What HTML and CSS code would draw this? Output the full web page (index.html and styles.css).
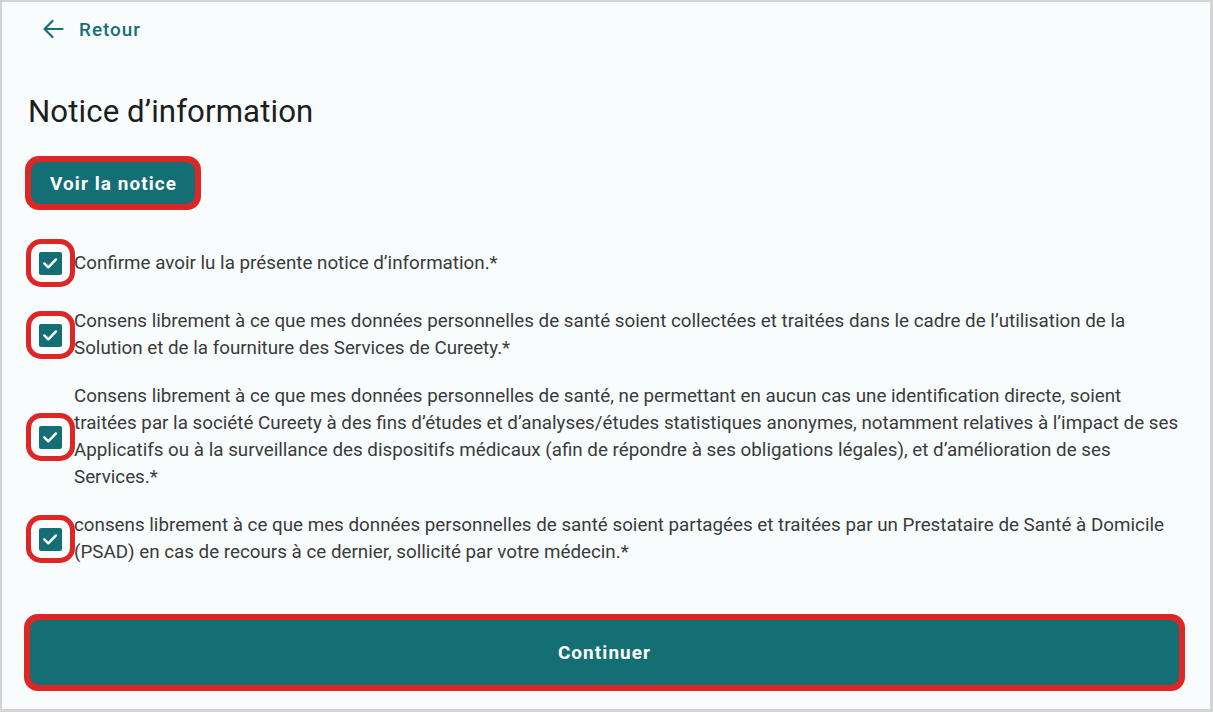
FILE: index.html
```html
<!DOCTYPE html>
<html lang="fr">
<head>
<meta charset="utf-8">
<title>Notice d'information</title>
<link rel="stylesheet" href="styles.css">
</head>
<body>
<div class="frame">
  <a class="back" href="#">
    <svg class="back-icon" viewBox="0 0 22 22" width="22" height="22" aria-hidden="true">
      <path d="M20.5 11H2.5M10.5 3L2.5 11L10.5 19" fill="none" stroke="#176f74" stroke-width="2.2" stroke-linecap="round" stroke-linejoin="round"/>
    </svg>
    <span>Retour</span>
  </a>

  <h1 class="title">Notice d’information</h1>

  <div class="ring ring-small">
    <button class="btn btn-small" type="button">Voir la notice</button>
  </div>

  <div class="list">
    <label class="row">
      <span class="cb"><span class="cb-ring"></span><span class="cb-box"><svg viewBox="0 0 22 22" width="22" height="22"><path d="M5.3 11.4L9.3 15.3L17 7.4" fill="none" stroke="#fff" stroke-width="2.4" stroke-linecap="round" stroke-linejoin="round"/></svg></span></span>
      <span class="txt">Confirme avoir lu la présente notice d’information.*</span>
    </label>
    <label class="row">
      <span class="cb"><span class="cb-ring"></span><span class="cb-box"><svg viewBox="0 0 22 22" width="22" height="22"><path d="M5.3 11.4L9.3 15.3L17 7.4" fill="none" stroke="#fff" stroke-width="2.4" stroke-linecap="round" stroke-linejoin="round"/></svg></span></span>
      <span class="txt">Consens librement à ce que mes données personnelles de santé soient collectées et traitées dans le cadre de l’utilisation de la Solution et de la fourniture des Services de Cureety.*</span>
    </label>
    <label class="row">
      <span class="cb"><span class="cb-ring"></span><span class="cb-box"><svg viewBox="0 0 22 22" width="22" height="22"><path d="M5.3 11.4L9.3 15.3L17 7.4" fill="none" stroke="#fff" stroke-width="2.4" stroke-linecap="round" stroke-linejoin="round"/></svg></span></span>
      <span class="txt">Consens librement à ce que mes données personnelles de santé, ne permettant en aucun cas une identification directe, soient traitées par la société Cureety à des fins d’études et d’analyses/études statistiques anonymes, notamment relatives à l’impact de ses Applicatifs ou à la surveillance des dispositifs médicaux (afin de répondre à ses obligations légales), et d’amélioration de ses Services.*</span>
    </label>
    <label class="row">
      <span class="cb"><span class="cb-ring"></span><span class="cb-box"><svg viewBox="0 0 22 22" width="22" height="22"><path d="M5.3 11.4L9.3 15.3L17 7.4" fill="none" stroke="#fff" stroke-width="2.4" stroke-linecap="round" stroke-linejoin="round"/></svg></span></span>
      <span class="txt">consens librement à ce que mes données personnelles de santé soient partagées et traitées par un Prestataire de Santé à Domicile (PSAD) en cas de recours à ce dernier, sollicité par votre médecin.*</span>
    </label>
  </div>

  <div class="ring ring-wide">
    <button class="btn btn-wide" type="button">Continuer</button>
  </div>
</div>
</body>
</html>
```

FILE: styles.css
```css
* { box-sizing: border-box; }
html, body { margin: 0; padding: 0; }
body {
  font-family: Roboto, "Noto Sans", Arial, sans-serif;
  background: #d6d6d6;
}
.frame {
  width: 1213px;
  height: 712px;
  border: 2px solid #d4d4d4;
  border-right-width: 3px;
  border-bottom-width: 3px;
  background: #f8fcfd;
  padding: 0 24px;
  display: flex;
  flex-direction: column;
  align-items: flex-start;
}
.back {
  display: flex;
  align-items: center;
  gap: 15px;
  margin: 16px 0 0 16px;
  text-decoration: none;
  color: #176f74;
  font-size: 18.9px;
  font-weight: 500;
  letter-spacing: 1px;
  height: 22px;
}
.back-icon { display: block; }
.title {
  margin: 53px 0 0 2px;
  font-size: 31.2px;
  font-weight: 400;
  color: #1d1d1d;
  line-height: 38px;
  letter-spacing: 0.1px;
}
.ring {
  border: 6px solid #dd2626;
  border-radius: 14px;
  background: #dd2626;
}
.ring-small {
  margin: 25px 0 0 -1px;
}
.ring-wide {
  margin: 48px 0 0 -2px;
  width: calc(100% + 1px);
}
.btn {
  display: block;
  border: 0;
  background: #146f75;
  color: #fff;
  font-family: Roboto, "Noto Sans", Arial, sans-serif;
  font-weight: 700;
  font-size: 18.9px;
  letter-spacing: 1.1px;
  border-radius: 9px;
  cursor: pointer;
}
.btn-small {
  height: 42px;
  padding: 0 18px 0 19px;
}
.btn-wide {
  width: 100%;
  height: 65px;
}
.list {
  margin-top: 29px;
  display: flex;
  flex-direction: column;
  gap: 21px;
  width: 100%;
}
.row {
  display: flex;
  align-items: center;
  min-height: 48px;
}
.cb {
  position: relative;
  flex: 0 0 48px;
  width: 48px;
  height: 48px;
  display: flex;
  align-items: center;
  justify-content: center;
}
.cb-ring {
  position: absolute;
  left: 0;
  top: 0;
  width: 49px;
  height: 48px;
  border: 5px solid #dd2626;
  border-radius: 15px;
}
.cb-box {
  width: 23px;
  height: 23px;
  background: #146f75;
  border-radius: 2px;
  display: flex;
  align-items: center;
  justify-content: center;
}
.txt {
  font-size: 18.8px;
  line-height: 27px;
  color: #3a3a3a;
}
```
